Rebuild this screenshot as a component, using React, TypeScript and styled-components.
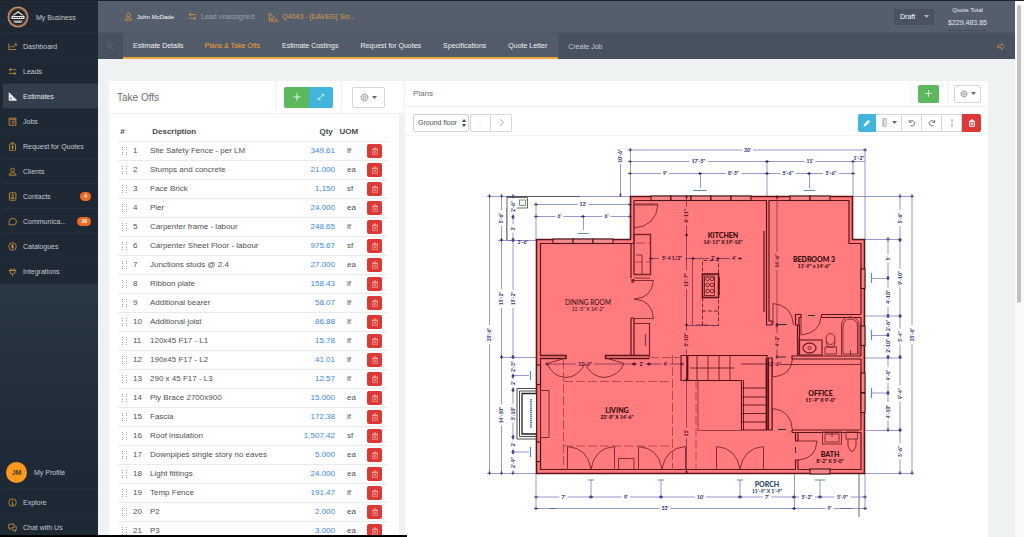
import React from "react";
import styled, { createGlobalStyle } from "styled-components";

const GlobalStyle = createGlobalStyle`
  *, *::before, *::after { box-sizing: border-box; }
  html, body { margin: 0; padding: 0; overflow: hidden; }
  body {
    font-family: "Liberation Sans", Arial, sans-serif;
    font-size: 8px;
    color: #4d5156;
    background: #fff;
  }
  button, select { font: inherit; color: inherit; margin: 0; }
  a { color: inherit; text-decoration: none; }
`;

const Shell = styled.div`
  display: flex;
  height: 100vh;
  overflow: hidden;
  border-top: 1px solid #1b232f;
`;

/* ---------- Sidebar ---------- */

const Sidebar = styled.aside`
  flex: 0 0 98px;
  display: flex;
  flex-direction: column;
  justify-content: space-between;
  font-size: 7px;
  color: #c3c9cf;
  background: linear-gradient(#2b3845 50%, #1d2935 88%);
`;

const Brand = styled.a`
  display: flex;
  align-items: center;
  gap: 7px;
  height: 32px;
  padding: 0 7px;
`;

const NavList = styled.ul`
  list-style: none;
  margin: 0;
  padding: 0;
`;

const MainNav = styled.nav`
  padding-bottom: 1px;
  background: #1e2935;
`;

const AccountNav = styled.nav`
  margin-bottom: -2px;
`;

const NavLink = styled.a<{ $active?: boolean }>`
  display: flex;
  align-items: center;
  gap: 9px;
  height: 25px;
  padding: 0 7px 0 5px;
  margin-left: 3px;
  border-top: 1px solid #232f3b;
  color: ${(p) => (p.$active ? "#e4e8ec" : "#c3c9cf")};
  background: ${(p) => (p.$active ? "#323e4c" : "transparent")};

  svg { flex: 0 0 auto; }
`;

const NavText = styled.span`
  flex: 1 1 auto;
  min-width: 0;
  margin-left: -3px;
  white-space: nowrap;
`;

const Badge = styled.span`
  padding: 0 4px;
  border-radius: 5px;
  background: #f26a21;
  color: #fff;
  font-size: 5px;
  font-weight: bold;
  line-height: 9px;
`;

const Profile = styled.a`
  display: flex;
  align-items: center;
  gap: 7px;
  height: 34px;
  padding: 0 6px;
`;

const Avatar = styled.span`
  width: 21px;
  height: 21px;
  border-radius: 50%;
  background: #fb9a1e;
  color: #4a3a20;
  font-size: 7px;
  font-weight: bold;
  line-height: 21px;
  text-align: center;
`;

/* ---------- Header ---------- */

const Main = styled.main`
  flex: 1 1 auto;
  min-width: 0;
  display: flex;
  flex-direction: column;
  background: #eef2f3;
`;

const TopBar = styled.header`
  flex: 0 0 31px;
  display: flex;
  align-items: center;
  gap: 14px;
  padding: 0 28px 0 26px;
  background: #545e6d;
  font-size: 7px;
`;

const Crumb = styled.a<{ $color: string; $small?: boolean }>`
  display: flex;
  align-items: center;
  gap: 4px;
  color: ${(p) => p.$color};
  font-size: ${(p) => (p.$small ? 6 : 7)}px;
  white-space: nowrap;
`;

const StatusBox = styled.div`
  position: relative;
  margin-left: auto;
  height: 16px;
  width: 40px;
  background: #485261;
  color: #fff;

  select {
    appearance: none;
    width: 100%;
    height: 100%;
    padding: 0 6px;
    border: 0;
    background: transparent;
  }
  svg { position: absolute; right: 5px; top: 6px; pointer-events: none; }
`;

const Total = styled.div`
  display: flex;
  flex-direction: column;
  align-items: center;
  gap: 5px;
  padding: 4px 0 3px;
  border-bottom: 1px solid #434c5a;
  color: #e6e9ec;
  line-height: 8px;
  span { font-size: 6px; }
`;

const TabBar = styled.nav`
  flex: 0 0 27px;
  display: flex;
  align-items: stretch;
  background: #48515f;
  border-top: 1px solid #4c5664;
  font-size: 7px;
`;

const Collapse = styled.button`
  width: 25px;
  padding: 0;
  border: 0;
  background: transparent;
  color: #717b89;
`;

const TabGroup = styled.div`
  display: flex;
  background: #515b69;
  border-bottom: 2px solid #f0a73a;
`;

const Tab = styled.a<{ $color?: string }>`
  display: flex;
  align-items: center;
  padding: 0 11px 0 10px;
  color: ${(p) => p.$color || "#f0f2f4"};
  white-space: nowrap;

  ${TabGroup} &:nth-child(n + 3) { padding-left: 11px; }
`;

const Forward = styled.a`
  display: flex;
  align-items: center;
  margin-left: auto;
  padding: 0 9px;
`;

/* ---------- Panels ---------- */

const Content = styled.div`
  flex: 1 1 auto;
  min-height: 0;
  display: flex;
  gap: 1px;
  padding: 22px 27px 0 11px;
`;

const TakeOffs = styled.section`
  flex: 0 0 295px;
`;

const Plans = styled.section`
  flex: 1 1 auto;
  min-width: 0;
  background: #fff;
`;

const PanelHead = styled.div<{ $height: number }>`
  display: flex;
  align-items: stretch;
  height: ${(p) => p.$height}px;
  background: #fff;
  border-bottom: 1px solid #eceeef;
`;

const Title = styled.h2<{ $size: number }>`
  flex: 1 1 auto;
  align-self: center;
  margin: 0;
  padding-left: 8px;
  font-size: ${(p) => p.$size}px;
  font-weight: normal;
  color: #6a6e73;
`;

const HeadCell = styled.div<{ $left: number; $right: number }>`
  display: flex;
  align-items: center;
  padding: 0 ${(p) => p.$right}px 0 ${(p) => p.$left}px;
  border-left: 1px solid #f2f3f4;
`;

const tones = {
  green: "#5cb85c",
  blue: "#41b5dc",
  red: "#dc3936",
  plain: "#fff",
};

const Button = styled.button<{ $tone: keyof typeof tones; $w: number; $h: number }>`
  display: flex;
  align-items: center;
  justify-content: center;
  gap: 3px;
  width: ${(p) => p.$w}px;
  height: ${(p) => p.$h}px;
  padding: 0;
  border: ${(p) => (p.$tone === "plain" ? "1px solid #d5d7d9" : "0")};
  border-radius: 2px;
  background: ${(p) => tones[p.$tone]};
  color: ${(p) => (p.$tone === "plain" ? "#888" : "#fff")};
`;

const ButtonGroup = styled.div`
  display: flex;
  ${Button} { border-radius: 0; }
  ${Button} + ${Button} { border-left-width: 0; }
  ${Button}:first-child { border-radius: 2px 0 0 2px; }
  ${Button}:last-child { border-radius: 0 2px 2px 0; }
`;

const TableWrap = styled.div`
  height: 100%;
  margin-right: 5px;
  padding: 8px 12px 0 9px;
  background: #fff;
`;

const Table = styled.table`
  width: 100%;
  table-layout: fixed;
  border-collapse: collapse;
  font-size: 8px;

  th, td {
    height: 19px;
    padding: 0;
    text-align: left;
    white-space: nowrap;
    border-bottom: 1px solid #e9eaeb;
  }
  th { color: #45494d; }
`;

const NumberCell = styled.td`
  svg { margin: 0 6px 0 4px; vertical-align: -2px; }
`;

const QtyCell = styled.td`
  && { text-align: right; }
  a { color: #3a86e4; }
`;

const UnitCell = styled.td`
  && { padding-left: 12px; }
`;

const DeleteCell = styled.td`
  && { padding-left: 1px; }
`;

const Toolbar = styled.div`
  display: flex;
  align-items: center;
  justify-content: space-between;
  height: 29px;
  padding: 3px 7px 0 8px;
  border-bottom: 1px solid #f3f4f5;
`;

const FloorPicker = styled.div`
  display: flex;
  align-items: center;
  position: relative;

  select {
    appearance: none;
    width: 56px;
    height: 18px;
    margin-right: 1px;
    padding: 0 4px;
    border: 1px solid #cfd1d3;
    border-radius: 2px;
    background: #fff;
    font-size: 7px;
  }
  > svg { position: absolute; left: 49px; top: 5px; pointer-events: none; }
`;

const PlanDrawing = styled.svg`
  display: block;
  width: 100%;
  height: auto;
  font-family: Lato, "Open Sans", sans-serif;
`;

const ScrollTrack = styled.div`
  flex: 0 0 9px;
  padding: 4px 3px 0 2px;
  background: #fafafa;
`;

const ScrollThumb = styled.div`
  height: 56%;
  border-radius: 2px;
  background: #c1c1c1;
`;

const BottomEdge = styled.div`
  position: fixed;
  left: 0;
  bottom: 0;
  width: 407px;
  height: 2px;
  background: #000;
`;

/* ---------- Icons ---------- */

const iconPaths: Record<string, React.ReactNode> = {
  dashboard: <><path d="M1 2v8h10" /><path d="M2.500 7.500 5 5l2 2 4-4M8.500 2.500H11V5" /></>,
  leads: <><path d="M11 3.500H2M4 1.500l-2.500 2L4 5.500M1 8.500h9M8 6.500l2.500 2-2.500 2" /></>,
  estimates: <><path d="M1.500 1v10h10z" fill="currentColor" /><path d="M3.500 7.500v1.500H5" stroke="#323e4c" /></>,
  setsquare: <><path d="M1.500 1v10h10z" /><path d="M4 7v2h2z" /></>,
  jobs: <><rect x="1.500" y="1.500" width="9" height="9.500" /><path d="M1.500 3h9M3.500 5.500h1M5.500 5.500h3.500M3.500 8h1M5.500 8h3.500" /></>,
  quotes: <><rect x="2" y="2.500" width="8" height="9" rx="1" /><path d="M4 1.200h4M6 4.500v5M7.500 5.500h-2.200v1.500h1.500v1.500H4.500" /></>,
  clients: <><circle cx="6" cy="4" r="2.500" /><path d="M1.500 11c0-2 1-3 2.500-3h4c1.500 0 2.500 1 2.500 3z" /></>,
  contacts: <><rect x="2" y="1" width="8.500" height="10" rx="1" /><circle cx="6.200" cy="4.500" r="1.200" /><path d="M4 8.500c0-2 4.500-2 4.500 0zM1 3h1M1 6h1M1 9h1" /></>,
  chat: <path d="M1.500 10.500V6a4 4 0 0 1 4-4h1.500a4.200 4.200 0 0 1 0 8.500z" />,
  catalogues: <><circle cx="6" cy="6" r="5" /><path d="M7.500 4.200H5.400a.9.900 0 0 0 0 1.800h1.200a.9.900 0 0 1 0 1.800H4.500M6 3v6" /></>,
  plug: <><path d="M2.500 4.500h7V6a3.500 3.500 0 0 1-7 0zM4 4.500V1.500M8 4.500V1.500M6 9.500V12M1 4.500h10" /></>,
  info: <><circle cx="6" cy="6" r="5" /><path d="M6 3v1M5 5.500h1V9M4.800 9h2.400" /></>,
  talk: <><path d="M1 1.500h7v5H4L2 8.500v-2H1z" /><path d="M9.500 4.500H11v5h-1v1.800L8 9.500H5.500V8" /></>,
  plus: <path d="M6 1.500v9M1.500 6h9" />,
  expand: <path d="M2.500 9.500l7-7M6.500 2h3.500v3.500M2 6.500V10h3.500" />,
  pencil: <><path d="M1.500 10.500 2 8l6-6 2 2-6 6z" fill="currentColor" /></>,
  gear: <><circle cx="6" cy="6" r="1.800" /><circle cx="6" cy="6" r="4" /><circle cx="6" cy="6" r="4.900" strokeDasharray="1.900 1.950" /></>,
  trash: <><path d="M2.500 3.500h7v7.500h-7zM1.500 3.500h9M4.500 3.300V1.500h3v1.800M5 5.500v3.500M7 5.500v3.500" /></>,
  undo: <path d="M2 1.500v3.500h3.500M2.300 4.800A4 4 0 1 1 3.500 9.500" />,
  redo: <path d="M10 1.500v3.500H6.500M9.700 4.800A4 4 0 1 0 8.500 9.500" />,
  ruler: <path d="M4 1h4v10H4zM4 3.500h2M4 6h2M4 8.500h2" />,
  updown: <path d="M6 2v8M4.500 1.500h3M4.500 10.500h3" />,
  prev: <path d="M7.500 2 4 6l3.500 4" />,
  next: <path d="M4 1.500 8.500 6 4 10.500" />,
  forward: <path d="M1 4.500h5V2l4.500 4L6 10V7.500H1z" />,
  collapse: <path d="M2 2v8M9.500 2H7.500L5.500 4v4l2 2h2" />,
};

const Icon = ({ name, size = 9, color = "currentColor", weight = 1 }: { name: string; size?: number; color?: string; weight?: number }) => (
  <svg width={size} height={size} viewBox="0 0 12 12" fill="none" stroke={color} strokeWidth={weight} strokeLinejoin="round" aria-hidden="true">
    {iconPaths[name]}
  </svg>
);

const Caret = ({ color = "#666" }: { color?: string }) => (
  <svg width="5" height="3" viewBox="0 0 5 3" aria-hidden="true"><path d="M0 0h5L2.500 3z" fill={color} /></svg>
);

const Grip = () => (
  <svg width="5" height="8" viewBox="0 0 5 8" fill="#a3a7ab" aria-hidden="true">
    {[0, 2, 5, 7].map((y) => [0, 4].map((x) => <rect key={`${x}-${y}`} x={x} y={y} width="1" height="1" />))}
  </svg>
);

const Logo = () => (
  <svg width="22" height="22" viewBox="0 0 22 22" aria-hidden="true">
    <circle cx="11" cy="11" r="10.500" fill="#c98b62" />
    <circle cx="11" cy="11" r="9" fill="#54443a" />
    <circle cx="11" cy="11" r="7.500" fill="#1c2329" />
    <path d="M5 9.500 11 5l6 4.500h-2L11 6.800 7 9.500z" fill="#d9dcdd" />
    <rect x="4.500" y="10" width="13" height="3" fill="#e2e4e5" />
    <path d="M6 11.500h10" stroke="#1c2329" strokeWidth="1" strokeDasharray="1.500 .7" />
    <path d="M6 14.500h10l-2 2.500H8z" fill="#aab0b3" />
  </svg>
);

/* ---------- Floor plan ---------- */

const INK = "#6a6bb8";
const LABEL = "#33337a";
const WALL = "#5c1419";

type DimProps = { a: number; b: number; at: number; label?: string; pos?: number; ink?: string; text?: string };

const tick = (x: number, y: number, vertical: boolean) =>
  vertical ? `M${x - 1.500} ${y}h3M${x} ${y - 2}v4` : `M${x} ${y - 1.500}v3M${x - 2} ${y}h4`;

const HDim = ({ a, b, at, label = "", pos = (a + b) / 2, ink = INK, text = LABEL }: DimProps) => {
  const half = label ? label.length * 1.300 + 1.500 : 0;
  return (
    <g>
      <path d={`M${a} ${at}H${pos - half}M${pos + half} ${at}H${b}`} stroke={ink} strokeWidth=".7" />
      <path d={tick(a, at, false) + tick(b, at, false)} stroke={text} strokeWidth=".8" />
      <text x={pos} y={at + 1.800} fontSize="5" fontWeight="900" textAnchor="middle" fill={text}>{label}</text>
    </g>
  );
};

const VDim = ({ a, b, at, label = "", pos = (a + b) / 2, ink = INK, text = LABEL }: DimProps) => {
  const half = label ? label.length * 1.300 + 1.500 : 0;
  return (
    <g>
      <path d={`M${at} ${a}V${pos - half}M${at} ${pos + half}V${b}`} stroke={ink} strokeWidth=".7" />
      <path d={tick(at, a, true) + tick(at, b, true)} stroke={text} strokeWidth=".8" />
      <text transform={`translate(${at + 1.800} ${pos}) rotate(-90)`} fontSize="5" fontWeight="900" textAnchor="middle" fill={text}>{label}</text>
    </g>
  );
};

const Room = ({ x, y, name, size, light, color = "#35090c" }: { x: number; y: number; name: string; size: string; light?: boolean; color?: string }) => (
  <g textAnchor="middle" fill={color} fontWeight={light ? 400 : 900}>
    <text x={x} y={y} fontSize={light ? 6.600 : 7}>{name}</text>
    <text x={x} y={y + 6} fontSize="5">{size}</text>
  </g>
);

const FrenchDoor = ({ x }: { x: number }) => (
  <path d={`M${x} 470V446.500Q${x + 20} 448 ${x + 23.500} 469Q${x + 27} 448 ${x + 47} 446.500V470`} />
);

const FloorPlan = () => (
  <PlanDrawing viewBox="405 136 583 401" role="img" aria-label="Ground floor plan">
    <path d="M630 196H853V239H865V473H536V239H630Z" fill="#ff7b7d" />

    {/* extension lines */}
    <g stroke={INK} strokeWidth=".7" fill="none">
      <path d="M630.500 148V196M767 161V196M853 160V196M865 148V240M700.500 173V188M809.500 173V188" />
      <path d="M487 196.500H630M498 240.500H536M536 202V240M583.500 216V230M501 357.500H536M487 473.500H536" />
      <path d="M853 196.500H914M865 239.500H902M865 316H902M865 358H902M865 430.500H902M865 473.500H914" />
      <path d="M872 278.500H888M872 335.500H888M872 393H888M513 375.500H529M513 452H529" />
      <path d="M536 473V510M591 480V497M661 480V497M740 480V497M820 480V497M794.500 473V510M865 473V510" />
    </g>
    <g stroke="#5b93a5" strokeWidth="1.200">
      <path d="M693 190.500H707M804 190.500H815M578 233.500H589M588 480H594M658 480H664M737 480H743M815 480H825" />
      <path d="M871.500 273V283M871.500 330V340M871.500 388V398M530.500 371V380M530.500 447V457" />
    </g>
    <path d="M859 473V517M506 196.500H580M550 508.500H557M840 508.500H852" stroke="#444" strokeWidth=".8" />
    <g stroke="#668f66" fill="none">
      <path d="M507 197V240M507 197.500H527.500V208H517" stroke="#444" strokeWidth=".8" />
      <path d="M506.500 208V240" strokeWidth=".8" />
      <rect x="519.500" y="200" width="6" height="5.500" strokeWidth=".9" />
    </g>

    <HDim a={630} b={865} at={150} label={`30'`} />
    <HDim a={630} b={767} at={161.500} label={`17'-5"`} />
    <HDim a={767} b={853} at={161.500} label={`11'`} />
    <HDim a={630} b={700} at={173.500} label={`9'`} />
    <HDim a={700} b={767} at={173.500} label={`8'-5"`} />
    <HDim a={767} b={809} at={173.500} label={`5'-6"`} />
    <HDim a={809} b={853} at={173.500} label={`5'-6"`} />
    <path d="M853 161.500H865M620.500 164V194" stroke={INK} strokeWidth=".7" />
    <path d={tick(620.500, 195, true)} stroke={LABEL} strokeWidth=".8" />
    <text x="859" y="160" fontSize="5" fontWeight="900" textAnchor="middle" fill={LABEL}>1'-2"</text>
    <text transform="translate(622.300 156) rotate(-90)" fontSize="5" fontWeight="900" textAnchor="middle" fill={LABEL}>10'-6"</text>
    <HDim a={536} b={630} at={204.500} label={`12'`} />
    <HDim a={536} b={583} at={216.500} label={`6'`} />
    <HDim a={583} b={630} at={216.500} label={`6'`} />
    <path d="M507 240.500H513" stroke={INK} strokeWidth=".7" />
    <text x="523" y="244" fontSize="5" fontWeight="900" textAnchor="middle" fill={LABEL}>3'-6"</text>

    <VDim a={196} b={473} at={489.500} label={`35'-6"`} />
    <VDim a={196} b={240} at={501.500} label={`5'-6"`} />
    <VDim a={240} b={357} at={501.500} label={`15'-2"`} />
    <VDim a={357} b={473} at={501.500} label={`14'-10"`} />
    <VDim a={196} b={217} at={513} label={`2'-6"`} />
    <VDim a={217} b={240} at={513} label={`3'`} />
    <VDim a={240} b={357} at={513} label={`15'-2"`} />
    <VDim a={357} b={376} at={513} label={`2'-3"`} />
    <VDim a={376} b={390} at={513} label={`2'`} />
    <VDim a={390} b={437} at={513} label={`5'-10"`} />
    <VDim a={437} b={452} at={513} label={`2'`} />
    <VDim a={452} b={473} at={513} label={`2'-9"`} />

    <VDim a={196} b={473} at={912} label={`35'-6"`} />
    <VDim a={196} b={240} at={900} label={`5'-6"`} />
    <VDim a={240} b={316} at={900} label={`9'-10"`} />
    <VDim a={316} b={357} at={900} label={`5'-4"`} />
    <VDim a={357} b={430} at={900} label={`9'-4"`} />
    <VDim a={430} b={473} at={900} label={`5'-6"`} />
    <VDim a={239} b={278} at={888} label={`5'`} />
    <VDim a={278} b={316} at={888} label={`4'-10"`} />
    <VDim a={316} b={335} at={888} label={`2'-6"`} />
    <VDim a={335} b={357} at={888} label={`2'-10"`} />
    <VDim a={357} b={393} at={888} label={`4'-6"`} />
    <VDim a={393} b={430} at={888} label={`4'-10"`} />

    <HDim a={536} b={591} at={497} label={`7'`} />
    <HDim a={591} b={661} at={497} label={`9'`} />
    <HDim a={661} b={740} at={497} label={`10'`} />
    <HDim a={740} b={794} at={497} label={`7'`} />
    <HDim a={794} b={820} at={497} label={`5'-3"`} />
    <HDim a={820} b={865} at={497} label={`5'-9"`} />
    <HDim a={536} b={794} at={508.500} label={`33'`} />
    <HDim a={794} b={865} at={508.500} label={`9'`} />

    {/* outer and inner walls */}
    <g fill="none" stroke={WALL} strokeWidth="1.200">
      <path d="M630.500 196.500H852.500V239.500H864.500V473.500H536.500V239.500H630.500Z" strokeWidth="1.600" />
      <path d="M634 200.500H766M769 200.500H849V243.500H861V314M861 317.500V356M861 359V429.500M861 432.500V469.500H798.500M795 469.500H540.500V358.500M540.500 355.500V243.500H634V200.500" />
      <path d="M631 243V278M633.500 279V282H632V279M631 318V355.500M634 318V355.500M631 318H634" />
      <path d="M766.500 200V325H772M769 200V321H772V325M764 231V255M764 255V312" />
      <path d="M540 355.500H566V358.500H540M649.500 358.500H605.500V355.500H649.500" strokeWidth="1.500" />
      <path d="M795.500 325V314.500H801V317.500H799V325ZM821.500 314.500H861M821.500 317.500H861M821.500 314.500V317.500" />
      <path d="M797.500 325V356H792V359H861M799.500 325V356H861" />
      <path d="M768.500 358V430H772V358Z" />
      <path d="M792 430H861M792 432.500H861M795.500 432V441H798V432.500M795.500 470V460H798V470M792 430V432.500" />
    </g>

    {/* windows */}
    <g stroke="#45141a" strokeWidth="1.100" fill="#f4898b">
      {[[651, 196], [671, 196], [691, 196], [711, 196], [731, 196], [790, 196], [810, 196], [553, 239], [573, 239], [593, 239]].map(([x, y]) => (
        <rect key={`${x}-${y}`} x={x} y={y} width="20" height="4.500" />
      ))}
      {[[861, 269], [861, 326], [861, 373], [861, 393], [536.500, 365], [536.500, 442]].map(([x, y]) => (
        <rect key={`${x}-${y}`} x={x} y={y} width="4" height="19.500" />
      ))}
      <rect x="810" y="469" width="20" height="5" />
    </g>

    {/* doors, fixtures and furniture */}
    <g fill="none" stroke="#74262b" strokeWidth=".9">
      <path d="M634 205H658Q656 226 634 228M634 204H658" />
      <rect x="634" y="234.500" width="16.500" height="40" strokeWidth="1.400" />
      <path d="M636 255H642V274M634 278H650" />
      <path d="M634 280.500H653.500Q652 298 634 299Q652 300 653.500 318.500H634" />
      <path d="M634 323.500H649.500V357" strokeWidth="1.200" />
      <path d="M566 358 547 363.500Q553 377 566 377.500Q578 377 585 364Q592 377 604 377.500Q619 376 624 363.500L606 358" />
      <FrenchDoor x={567.500} />
      <FrenchDoor x={638.500} />
      <FrenchDoor x={716.500} />
      <path d="M618.500 470V458.500H634V470" />
      <path d="M549 390.500V437.500H540.500V390.500Z" />
      <path d="M773 325V303.500Q792 305 793.500 325" />
      <path d="M801 317V335Q820 333 821 317" />
      <path d="M772.500 358V377Q791 376 792.500 359" />
      <path d="M772.500 430V408.500Q791 410 792.500 430" />
      <path d="M798 441H817Q816 459 798 460" />
      <rect x="798" y="340" width="24" height="15" strokeWidth="1.300" />
      <ellipse cx="809.500" cy="348" rx="6.500" ry="5" strokeWidth="1.300" />
      <circle cx="809.500" cy="348" r="1.500" />
      <ellipse cx="830.500" cy="339" rx="4.500" ry="5.500" />
      <path d="M826 341 827.500 347H834L835 341M825 347H836.500V354H825Z" />
      <path d="M841.500 355V325Q842 317 850 317Q859 317 859 325V355" />
      <path d="M843 354V326Q844 319 850 319Q857 319 857.500 326V354ZM850.500 350V355" />
      <rect x="822.500" y="432" width="19" height="12" />
      <path d="M825 434H839V442H825ZM832 432V437" />
      <rect x="846" y="432" width="11.500" height="7" />
      <path d="M848 439V446Q852 457 856 446V439" />
      <path d="M780 364.500H861" />
    </g>

    {/* stairs */}
    <g fill="none" stroke="#571217" strokeWidth="1.100">
      <path d="M681 355.500H767V430H741.500V380.500H681ZM687 355.500V380.500" />
      <path d="M697 356V380M708 356V380M719 356V380M730 356V380M690 368H734M741 364H766" strokeWidth=".8" />
      <path d="M742 388H767M742 397H767M742 405H767M742 413.500H767M742 422H767M743.500 380V430" strokeWidth=".9" />
      <path d="M698 380V430.500H741" strokeWidth=".6" />
      <path d="M687.500 355V380M766.500 358V430" strokeWidth="1.800" />
    </g>

    {/* kitchen island and range */}
    <g fill="none" stroke="#571217">
      <path d="M702.500 325.500V260.500H718.500V325.500ZM702 311H718" strokeWidth=".8" strokeDasharray="4 2" />
      <rect x="702.500" y="274" width="16" height="23.500" strokeWidth="1.600" />
      <rect x="704.500" y="276" width="10" height="19.500" strokeWidth=".8" />
      <path d="M719 277V295" strokeWidth="1.600" />
      {[279, 285, 291].map((y) => <g key={y} strokeWidth=".8"><circle cx="707.500" cy={y} r="1.800" /><circle cx="712" cy={y} r="1.800" /></g>)}
    </g>

    {/* dashed ceiling lines */}
    <g fill="none" stroke="#a83a40" strokeWidth=".8" strokeDasharray="9 3">
      <path d="M563.500 360V470M564 381.500H672M564 446H672M672.500 355V470M650 357.500H681M636 243H650M696 380V470M634 262H650" />
    </g>

    {/* interior dimensions */}
    <VDim a={197} b={235} at={686.500} label={`6'-11"`} ink="#6b2a4a" text="#4a1230" />
    <VDim a={235} b={325} at={686.500} label={`11'-7"`} ink="#6b2a4a" text="#4a1230" />
    <VDim a={325} b={380} at={686.500} label={`5'-10"`} pos={340} ink="#6b2a4a" text="#4a1230" />
    <VDim a={380} b={472} at={686.500} label={`11'`} pos={433} ink="#6b2a4a" text="#4a1230" />
    <HDim a={651} b={693} at={258.500} label={`5'-4 1/2"`} ink="#6b2a4a" text="#4a1230" />
    <HDim a={693} b={718} at={258.500} label={`2'`} pos={713} ink="#6b2a4a" text="#4a1230" />
    <HDim a={718} b={740} at={258.500} label={`4'`} pos={734} ink="#6b2a4a" text="#4a1230" />
    <path d="M692.500 258V325M686 325.500H718M696 325H708" stroke="#6b2a4a" strokeWidth=".7" />
    <VDim a={197} b={325} at={777} label={`14'-6"`} ink="#6b2a4a" text="#4a1230" />
    <VDim a={325} b={357} at={777} label={`4'-2"`} ink="#6b2a4a" text="#4a1230" />
    <HDim a={547} b={634} at={364} label={`12'-6"`} pos={585} ink="#6b2a4a" text="#4a1230" />
    <HDim a={634} b={649} at={364} label={`2'`} ink="#6b2a4a" text="#4a1230" />
    <HDim a={649} b={682} at={364} label={`4'`} ink="#6b2a4a" text="#4a1230" />
    <text x="774" y="366" fontSize="5" fontWeight="900" textAnchor="middle" fill="#4a1230">12'-6"</text>
    <path d="M778 324.500H787M778 357H786M778 429.500H786M808 315.500H815M795.500 447V453" stroke="#333" strokeWidth="1" />
    <path d="M645.500 334V346" stroke="#7c3a6a" strokeWidth="1.300" />

    {/* fireplace bay */}
    <path d="M536 388.500H517V439H536M536 391H519.500V436.500H536" fill="none" stroke="#333" strokeWidth=".9" />
    <path d="M536 393.500H522V434H536" fill="#fff" stroke="#222" strokeWidth="1.300" />
    <path d="M531 399V428" stroke="#5b93a5" strokeWidth="2" strokeDasharray="1.500 .6" />

    <Room x={723} y={238} name="KITCHEN" size={`16'-11" X 19'-10"`} />
    <Room x={814} y={262} name="BEDROOM 3" size={`11'-9" x 14'-6"`} />
    <Room x={588} y={305} name="DINING ROOM" size={`11'-5" X 14'-2"`} light />
    <Room x={617} y={413} name="LIVING" size={`23'-8" X 14'-6"`} />
    <Room x={820.500} y={396} name="OFFICE" size={`11'-9" X 9'-0"`} />
    <Room x={830} y={457} name="BATH" size={`8'-2" X 5'-0"`} />
    <Room x={767} y={487} name="PORCH" size={`11'-9" X 1'-9"`} color="#2c4a70" />
  </PlanDrawing>
);

/* ---------- Data ---------- */

const navItems: { label: string; icon: string; badge?: number }[] = [
  { label: "Dashboard", icon: "dashboard" },
  { label: "Leads", icon: "leads" },
  { label: "Estimates", icon: "estimates" },
  { label: "Jobs", icon: "jobs" },
  { label: "Request for Quotes", icon: "quotes" },
  { label: "Clients", icon: "clients" },
  { label: "Contacts", icon: "contacts", badge: 4 },
  { label: "Communica...", icon: "chat", badge: 28 },
  { label: "Catalogues", icon: "catalogues" },
  { label: "Integrations", icon: "plug" },
];

const tabs = ["Estimate Details", "Plans & Take Offs", "Estimate Costings", "Request for Quotes", "Specifications", "Quote Letter"];

const rows: [string, string, string][] = [
  ["Site Safety Fence - per LM", "349.61", "lf"],
  ["Stumps and concrete", "21.000", "ea"],
  ["Face Brick", "1,150", "sf"],
  ["Pier", "24.000", "ea"],
  ["Carpenter frame - labour", "248.65", "lf"],
  ["Carpenter Sheet Floor - labour", "975.67", "sf"],
  ["Junctions studs @ 2.4", "27.000", "ea"],
  ["Ribbon plate", "158.43", "lf"],
  ["Additional bearer", "58.07", "lf"],
  ["Additional joist", "86.88", "lf"],
  ["120x45 F17 - L1", "15.78", "lf"],
  ["190x45 F17 - L2", "41.01", "lf"],
  ["290 x 45 F17 - L3", "12.57", "lf"],
  ["Ply Brace 2700x900", "15.000", "ea"],
  ["Fascia", "172.38", "lf"],
  ["Roof insulation", "1,507.42", "sf"],
  ["Downpipes single story no eaves", "5.000", "ea"],
  ["Light fittings", "24.000", "ea"],
  ["Temp Fence", "191.47", "lf"],
  ["P2", "2.000", "ea"],
  ["P3", "3.000", "ea"],
];

const ORANGE = "#e39a35";

export default function App() {
  return (
    <>
      <GlobalStyle />
      <Shell>
        <Sidebar>
          <MainNav aria-label="Main">
            <Brand href="#"><Logo />My Business</Brand>
            <NavList>
              {navItems.map((item) => {
                const active = item.label === "Estimates";
                return (
                  <li key={item.label}>
                    <NavLink href="#" $active={active}>
                      <Icon name={item.icon} color={active ? "#fff" : ORANGE} />
                      <NavText>{item.label}</NavText>
                      {item.badge && <Badge>{item.badge}</Badge>}
                    </NavLink>
                  </li>
                );
              })}
            </NavList>
          </MainNav>
          <AccountNav aria-label="Account">
            <Profile href="#"><Avatar>JM</Avatar>My Profile</Profile>
            <NavLink href="#"><Icon name="info" color={ORANGE} /><NavText>Explore</NavText></NavLink>
            <NavLink href="#"><Icon name="talk" color={ORANGE} /><NavText>Chat with Us</NavText></NavLink>
          </AccountNav>
        </Sidebar>

        <Main>
          <TopBar>
            <Crumb href="#" $color="#fff" $small><Icon name="clients" color={ORANGE} />John McDade</Crumb>
            <Crumb href="#" $color="#98a1ac"><Icon name="leads" color={ORANGE} />Lead unassigned</Crumb>
            <Crumb href="#" $color="#d79a4c"><Icon name="setsquare" size={10} color={ORANGE} />Q4043 - [DAVEG] Sin...</Crumb>
            <StatusBox>
              <select aria-label="Quote status"><option>Draft</option></select>
              <Caret color="#aeb5be" />
            </StatusBox>
            <Total><span>Quote Total</span>$229,483.85</Total>
          </TopBar>
          <TabBar aria-label="Estimate sections">
            <Collapse aria-label="Collapse"><Icon name="collapse" size={8} /></Collapse>
            <TabGroup>
              {tabs.map((t) => <Tab key={t} href="#" $color={t === "Plans & Take Offs" ? "#f5a030" : undefined}>{t}</Tab>)}
            </TabGroup>
            <Tab href="#" $color="#c5cad0">Create Job</Tab>
            <Forward href="#" aria-label="Next"><Icon name="forward" color="#d08a4a" /></Forward>
          </TabBar>

          <Content>
            <TakeOffs>
              <PanelHead $height={33}>
                <Title $size={10}>Take Offs</Title>
                <HeadCell $left={8} $right={8}>
                  <ButtonGroup>
                    <Button $tone="green" $w={25} $h={21} aria-label="Add take off"><Icon name="plus" size={10} /></Button>
                    <Button $tone="blue" $w={24} $h={21} aria-label="Expand"><Icon name="expand" size={8} /></Button>
                  </ButtonGroup>
                </HeadCell>
                <HeadCell $left={10} $right={19}>
                  <Button $tone="plain" $w={33} $h={21} aria-label="Take off settings"><Icon name="gear" size={9} /><Caret /></Button>
                </HeadCell>
              </PanelHead>
              <TableWrap>
                <Table>
                  <colgroup>
                    <col style={{ width: 32 }} /><col /><col style={{ width: 50 }} /><col style={{ width: 31 }} /><col style={{ width: 21 }} />
                  </colgroup>
                  <thead>
                    <tr>
                      <th scope="col">&nbsp;#</th>
                      <th scope="col">&nbsp;Description</th>
                      <th scope="col" style={{ textAlign: "right" }}>Qty&nbsp;</th>
                      <th scope="col">&nbsp;&nbsp;UOM</th>
                      <th aria-label="Actions" />
                    </tr>
                  </thead>
                  <tbody>
                    {rows.map(([name, qty, unit], i) => (
                      <tr key={name}>
                        <NumberCell><Grip />{i + 1}</NumberCell>
                        <td>{name}</td>
                        <QtyCell><a href="#">{qty}</a></QtyCell>
                        <UnitCell>{unit}</UnitCell>
                        <DeleteCell>
                          <Button $tone="red" $w={15} $h={14} aria-label={`Delete ${name}`}><Icon name="trash" size={8} color="#f5b9b5" /></Button>
                        </DeleteCell>
                      </tr>
                    ))}
                  </tbody>
                </Table>
              </TableWrap>
            </TakeOffs>

            <Plans>
              <PanelHead $height={26}>
                <Title $size={8}>Plans</Title>
                <HeadCell $left={7} $right={8}>
                  <Button $tone="green" $w={21} $h={18} aria-label="Add plan"><Icon name="plus" size={9} /></Button>
                </HeadCell>
                <HeadCell $left={6} $right={7}>
                  <Button $tone="plain" $w={27} $h={18} aria-label="Plan settings"><Icon name="gear" size={8} /><Caret /></Button>
                </HeadCell>
              </PanelHead>
              <Toolbar>
                <FloorPicker>
                  <select aria-label="Floor"><option>Ground floor</option></select>
                  <svg width="4" height="8" viewBox="0 0 4 8" aria-hidden="true"><path d="M2 0l2 3H0zM2 8l2-3H0z" fill="#444" /></svg>
                  <ButtonGroup>
                    <Button $tone="plain" $w={21} $h={18} aria-label="Previous floor" disabled><Icon name="prev" size={7} color="#e3e4e5" /></Button>
                    <Button $tone="plain" $w={21} $h={18} aria-label="Next floor"><Icon name="next" size={9} /></Button>
                  </ButtonGroup>
                </FloorPicker>
                <ButtonGroup>
                  <Button $tone="blue" $w={18} $h={18} aria-label="Draw"><Icon name="pencil" size={8} /></Button>
                  <Button $tone="plain" $w={26} $h={18} aria-label="Measure"><Icon name="ruler" size={9} /><Caret /></Button>
                  <Button $tone="plain" $w={20} $h={18} aria-label="Undo"><Icon name="undo" size={8} weight={1.500} color="#777" /></Button>
                  <Button $tone="plain" $w={20} $h={18} aria-label="Redo"><Icon name="redo" size={8} weight={1.500} color="#777" /></Button>
                  <Button $tone="plain" $w={20} $h={18} aria-label="Fit"><Icon name="updown" size={8} /></Button>
                  <Button $tone="red" $w={19} $h={18} aria-label="Delete plan"><Icon name="trash" size={8} weight={1.500} /></Button>
                </ButtonGroup>
              </Toolbar>
              <FloorPlan />
            </Plans>
          </Content>
        </Main>
        <ScrollTrack><ScrollThumb /></ScrollTrack>
      </Shell>
      <BottomEdge />
    </>
  );
}
